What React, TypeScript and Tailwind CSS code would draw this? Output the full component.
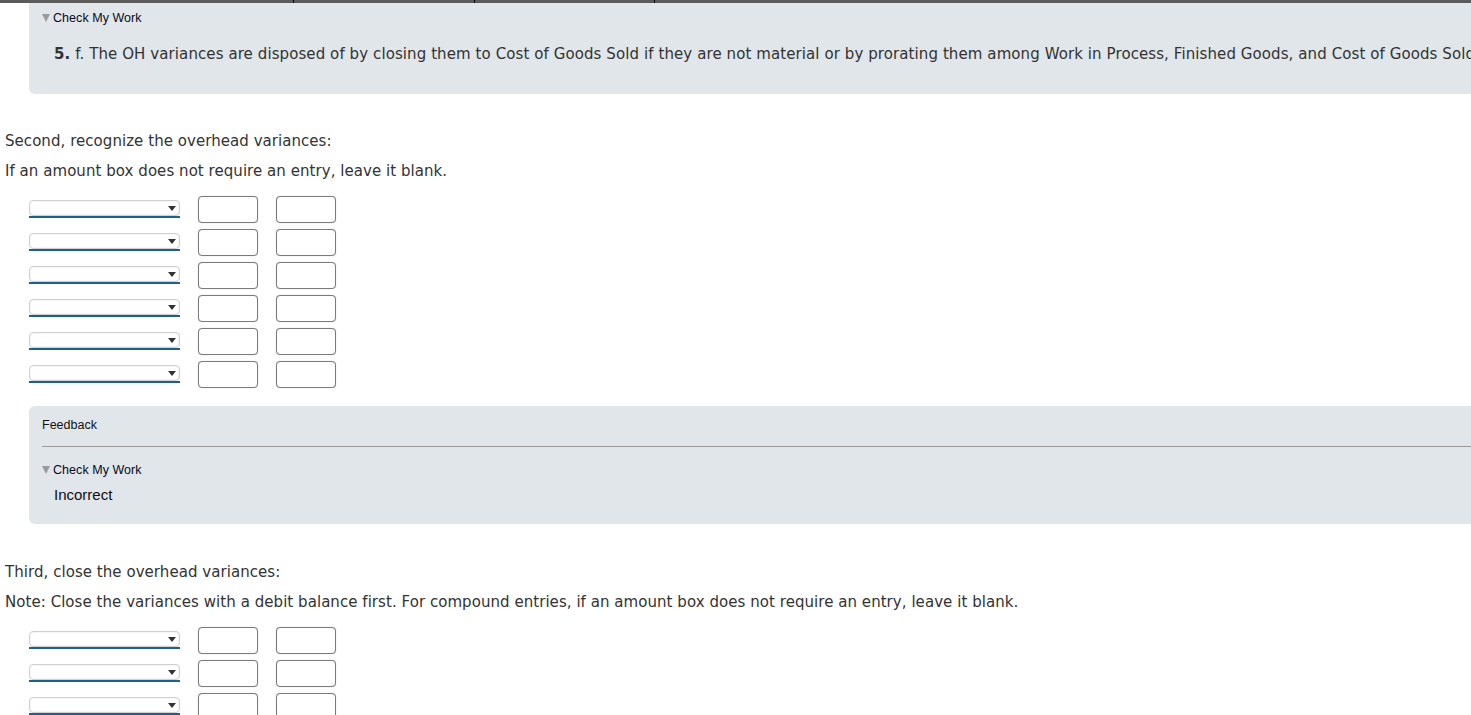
const verdana = "font-['Verdana','DejaVu_Sans',sans-serif]";

function CheckMyWork() {
  return (
    <div className="flex h-[18px] items-center font-['Liberation_Sans',Arial,sans-serif] text-[12.5px] text-[#0a0a1e]">
      <span className="mr-[3px] inline-block h-0 w-0 border-x-[4px] border-t-[8px] border-x-transparent border-t-[#9a9a9a]" />
      Check My Work
    </div>
  );
}

function EntryRow() {
  return (
    <div className="flex h-[33px] items-start">
      <div className="mt-[4px] w-[151px]">
        <div className="relative h-[16px] rounded-[4px] border border-[#d0d0d0] bg-white shadow-[inset_0_0_2px_rgba(0,0,0,0.12)]">
          <span className="absolute right-[3px] top-[5px] h-0 w-0 border-x-[4px] border-t-[5px] border-x-transparent border-t-[#333]" />
        </div>
        <div className="h-[2px] bg-[#1f5f8e]" />
      </div>
      <div className="ml-[18px] h-[27px] w-[60px] rounded-[4px] border border-[#7a7a7a] bg-white shadow-[0_0_1px_rgba(0,0,0,0.3)]" />
      <div className="ml-[18px] h-[27px] w-[60px] rounded-[4px] border border-[#7a7a7a] bg-white shadow-[0_0_1px_rgba(0,0,0,0.3)]" />
    </div>
  );
}

export default function App() {
  return (
    <div className={`min-h-screen overflow-hidden bg-white ${verdana} text-[15px] tracking-[0.05px] text-[#333]`}>
      <div className="flex h-[3px] bg-[#5b5b5b]">
        <div className="w-[294px] border-r border-black" />
        <div className="w-[181px] border-r border-black" />
        <div className="w-[180px] border-r border-black" />
      </div>

      <div className="ml-[29px] h-[91px] rounded-bl-[6px] bg-[#e0e6e9] pl-[13px] pt-[6px]">
        <CheckMyWork />
        <p className="ml-[12px] mt-[15px] whitespace-nowrap tracking-[0.09px] leading-[24px]">
          <b>5.</b> f. The OH variances are disposed of by closing them to Cost of Goods Sold if they are not material or by prorating them among Work in Process, Finished Goods, and Cost of Goods Sold.
        </p>
      </div>

      <div className="pl-[5px] pt-[35px]">
        <p className="leading-[24px]">Second, recognize the overhead variances:</p>
        <p className="mt-[6px] leading-[24px]">If an amount box does not require an entry, leave it blank.</p>
      </div>

      <div className="ml-[29px] mt-[13px]">
        {[0, 1, 2, 3, 4, 5].map((i) => (
          <EntryRow key={i} />
        ))}
      </div>

      <div className="ml-[29px] mt-[12px] h-[118px] rounded-l-[6px] bg-[#e0e6e9] pl-[13px] pt-[10px] font-['Liberation_Sans',Arial,sans-serif]">
        <div className="text-[12.5px] leading-[18px] tracking-normal text-[#111]">Feedback</div>
        <div className="mt-[12px] h-px bg-[#9a9a9a]" />
        <div className="mt-[14px]">
          <CheckMyWork />
        </div>
        <div className="ml-[12px] mt-[7px] text-[15px] leading-[18px] tracking-normal text-[#111]">Incorrect</div>
      </div>

      <div className="pl-[5px] pt-[36px]">
        <p className="leading-[24px]">Third, close the overhead variances:</p>
        <p className="mt-[6px] leading-[24px]">
          Note: Close the variances with a debit balance first. For compound entries, if an amount box does not require an entry, leave it blank.
        </p>
      </div>

      <div className="ml-[29px] mt-[13px]">
        {[0, 1, 2].map((i) => (
          <EntryRow key={i} />
        ))}
      </div>
    </div>
  );
}
